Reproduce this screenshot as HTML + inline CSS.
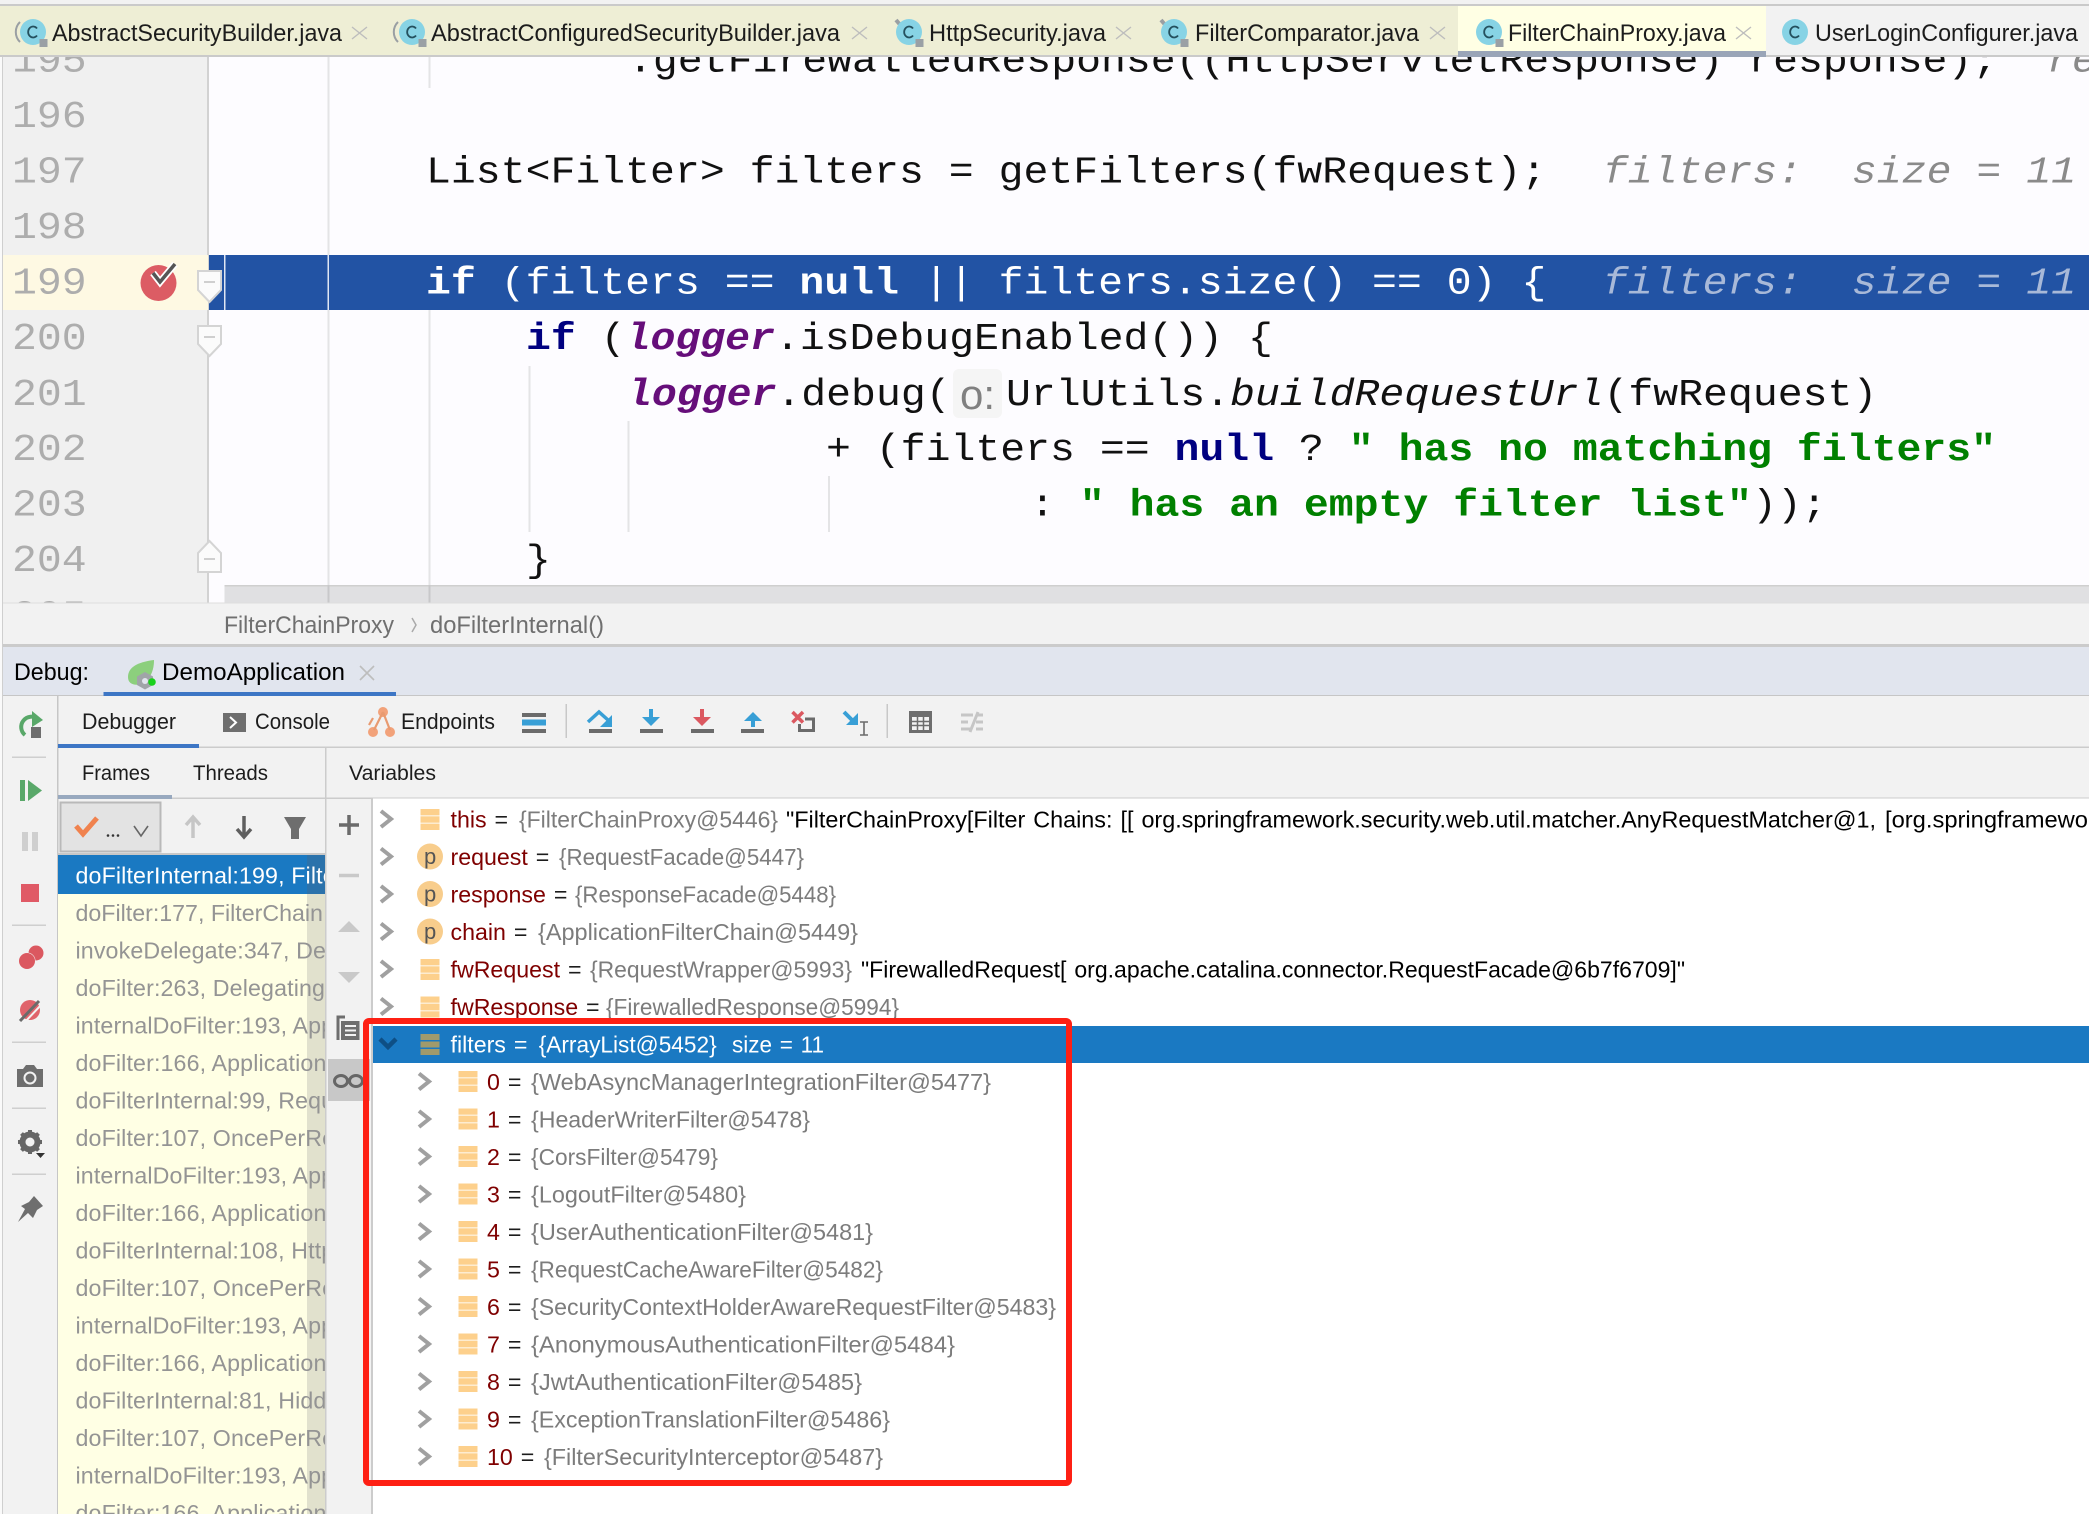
<!DOCTYPE html>
<html><head><meta charset="utf-8"><title>FilterChainProxy Debug</title>
<style>
html,body{margin:0;padding:0;background:#f2f2f2;width:2089px;height:1514px;overflow:hidden}
svg{display:block;position:absolute;left:0;top:0}
text{white-space:pre;font-family:"Liberation Sans",sans-serif;font-size:23.2px;fill:#1c1c1c}
.m{font-family:"Liberation Mono",monospace;font-size:41.5px;fill:#111}
.n{fill:#adadad}
.k{font-weight:bold;fill:#000080}
.l{font-weight:bold;font-style:italic;fill:#660e7a}
.s{font-weight:bold;fill:#008000}
.h{font-style:italic;fill:#8a8a8a}
.w{fill:#fff}
.hw{font-style:italic;fill:#a8b9d8}
.f{fill:#949494;letter-spacing:.14px}
.v{fill:#7f0000}
.g{fill:#7c7c7c}
.b{fill:#000}
</style></head><body>
<svg width="2089" height="1514" viewBox="0 0 2089 1514" xmlns="http://www.w3.org/2000/svg">
<defs>
<clipPath id="edit"><rect x="0" y="57" width="2089" height="546"/></clipPath>
<clipPath id="fr"><rect x="58" y="855" width="267" height="659"/></clipPath>
<clipPath id="tree"><rect x="373" y="798" width="1716" height="716"/></clipPath>
<g id="bars"><rect x="0" y="0" width="19" height="21" fill="#fdecd0"/><rect x="0" y="0" width="19" height="6" fill="#fdd08c"/><rect x="0" y="7.500" width="19" height="6" fill="#fdd08c"/><rect x="0" y="15" width="19" height="6" fill="#fdd08c"/></g>
<path id="chev" d="M-5-8 5 0-5 8" fill="none" stroke="#a0a0a0" stroke-width="4"/>
<g id="cls"><circle cx="0" cy="0" r="13" fill="#87d3e5"/><path d="M4-3.500A5 5.500 0 1 0 4 3.500" fill="none" stroke="#24505e" stroke-width="1.800"/><rect x="6.500" y="7" width="8" height="8" fill="#9aa0a5"/></g>
<path id="xx" d="M0 0 15 12M15 0 0 12" stroke="#bdbdbd" stroke-width="1.400" fill="none"/>
</defs>

<!-- base -->
<rect width="2089" height="1514" fill="#f2f2f2"/>

<!-- editor -->
<rect x="0" y="57" width="2089" height="546" fill="#fdfcff"/>
<rect x="0" y="57" width="208" height="546" fill="#f0f0f0"/>
<rect x="207" y="57" width="2" height="546" fill="#d2d2d2"/>
<rect x="0" y="0" width="2" height="1514" fill="#fafafa"/>
<rect x="2" y="57" width="1" height="1457" fill="#cfcfcf"/>

<rect x="327.500" y="57" width="2" height="546" fill="#e4e4e6"/>
<rect x="428.500" y="57" width="2" height="31" fill="#e4e4e6"/>
<rect x="428.500" y="310" width="2" height="293" fill="#e4e4e6"/>
<rect x="528.500" y="366" width="2" height="166" fill="#e4e4e6"/>
<rect x="627.500" y="421" width="2" height="111" fill="#e4e4e6"/>
<rect x="828" y="476" width="2" height="56" fill="#e4e4e6"/>

<!-- current line -->
<rect x="3" y="255" width="205" height="55" fill="#fef9e3"/>
<rect x="209" y="255" width="1880" height="55" fill="#2253a4"/>
<rect x="224" y="255" width="1.500" height="55" fill="#dfe6f3"/>
<rect x="327.500" y="255" width="1.500" height="55" fill="#dfe6f3"/>

<!-- inlay hint bg -->
<rect x="953" y="369" width="49" height="49" rx="6" fill="#f5f5f5"/>

<g clip-path="url(#edit)">
<g transform="scale(1 .92)">
<text class="m n" x="12" y="77.700">195</text>
<text class="m n" x="12" y="138">196</text>
<text class="m n" x="12" y="198.400">197</text>
<text class="m n" x="12" y="258.700">198</text>
<text class="m n" x="12" y="319">199</text>
<text class="m n" x="12" y="379.300">200</text>
<text class="m n" x="12" y="440.200">201</text>
<text class="m n" x="12" y="500">202</text>
<text class="m n" x="12" y="560.300">203</text>
<text class="m n" x="12" y="620.700">204</text>
<text class="m n" x="12" y="681">205</text>

<text class="m" x="628" y="77.700">.getFirewalledResponse((HttpServletResponse) response);  <tspan class="h">re</tspan></text>
<text class="m" x="426" y="198.400">List&lt;Filter&gt; filters = getFilters(fwRequest);  <tspan class="h" x="1603">filters:  size = 11</tspan></text>
<text class="m w" x="426" y="319"><tspan class="w" font-weight="bold">if</tspan> (filters == <tspan class="w" font-weight="bold">null</tspan> || filters.size() == 0) {<tspan class="hw" x="1603">filters:  size = 11</tspan></text>
<text class="m" x="526" y="379.300"><tspan class="k">if</tspan> (<tspan class="l">logger</tspan>.isDebugEnabled()) {</text>
<text class="m" x="627" y="440.200"><tspan class="l">logger</tspan>.debug(</text>
<text class="m" x="1006" y="440.200">UrlUtils.<tspan font-style="italic">buildRequestUrl</tspan>(fwRequest)</text>
<text class="m" x="826" y="500">+ (filters == <tspan class="k">null</tspan> ? <tspan class="s">" has no matching filters"</tspan></text>
<text class="m" x="1030" y="560.300">: <tspan class="s">" has an empty filter list"</tspan>));</text>
<text class="m" x="526" y="620.700">}</text>
</g>
<text x="960" y="409" style="font-size:42px;fill:#808080">o:</text>
</g>

<!-- fold markers -->
<path d="M198 271H221V290L209.500 302 198 290Z" fill="#fbfbfb" stroke="#d4d4d4" stroke-width="2"/><path d="M204 282H215" stroke="#cfcfcf" stroke-width="2"/>
<path d="M198 326H221V344L209.500 356 198 344Z" fill="#fbfbfb" stroke="#d4d4d4" stroke-width="2"/><path d="M204 337H215" stroke="#cfcfcf" stroke-width="2"/>
<path d="M198 572H221V553L209.500 541 198 553Z" fill="#fbfbfb" stroke="#d4d4d4" stroke-width="2"/><path d="M204 559H215" stroke="#cfcfcf" stroke-width="2"/>

<!-- breakpoint -->
<ellipse cx="158.500" cy="283" rx="18" ry="18" fill="#dc5c64"/>
<path d="M153 273 160 282 175 264" fill="none" stroke="#fff" stroke-width="7"/>
<path d="M153 273 160 282 175 264" fill="none" stroke="#555" stroke-width="3.500"/>

<!-- editor h scrollbar -->
<rect x="224.500" y="585" width="1865" height="18" fill="#e0e0e2"/>
<rect x="224.500" y="585" width="1865" height="1.500" fill="#cfcfcf"/>
<rect x="327.500" y="585" width="2" height="18" fill="#c8c8ca"/>
<rect x="428.500" y="585" width="2" height="18" fill="#c8c8ca"/>

<!-- top tabs -->
<rect x="0" y="0" width="2089" height="4" fill="#f2f2f2"/>
<rect x="0" y="6" width="1458" height="49" fill="#eeeed5"/>
<rect x="1458" y="6" width="308" height="49" fill="#ffffe4"/>
<rect x="1766" y="6" width="323" height="49" fill="#f2f2f2"/>
<rect x="0" y="4" width="2089" height="2" fill="#cacaca"/>
<rect x="0" y="55" width="2089" height="2" fill="#cacaca"/>
<rect x="1458" y="51" width="308" height="6" fill="#9aa5b8"/>

<path d="M20 22A14 14 0 0 0 20 42" fill="none" stroke="#9a9fa3" stroke-width="2"/>
<use href="#cls" x="33" y="32"/>
<text x="52" y="41" textLength="290" lengthAdjust="spacingAndGlyphs" style="font-size:24px">AbstractSecurityBuilder.java</text>
<use href="#xx" x="352" y="27"/>
<path d="M398 22A14 14 0 0 0 398 42" fill="none" stroke="#9a9fa3" stroke-width="2"/>
<use href="#cls" x="412" y="32"/>
<text x="431" y="41" textLength="409" lengthAdjust="spacingAndGlyphs" style="font-size:24px">AbstractConfiguredSecurityBuilder.java</text>
<use href="#xx" x="852" y="27"/>
<path d="M896 20 902 27" stroke="#9a9fa3" stroke-width="4"/>
<use href="#cls" x="909" y="32"/>
<text x="929" y="41" textLength="177" lengthAdjust="spacingAndGlyphs" style="font-size:24px">HttpSecurity.java</text>
<use href="#xx" x="1116" y="27"/>
<path d="M1161 20 1167 27" stroke="#9a9fa3" stroke-width="4"/>
<use href="#cls" x="1174" y="32"/>
<text x="1195" y="41" textLength="224" lengthAdjust="spacingAndGlyphs" style="font-size:24px">FilterComparator.java</text>
<use href="#xx" x="1430" y="27"/>
<use href="#cls" x="1489" y="32"/>
<text x="1508" y="41" textLength="218" lengthAdjust="spacingAndGlyphs" style="font-size:24px">FilterChainProxy.java</text>
<use href="#xx" x="1736" y="27"/>
<circle cx="1795" cy="32" r="13" fill="#87d3e5"/><path d="M1799 28.500A5 5.500 0 1 0 1799 35.500" fill="none" stroke="#24505e" stroke-width="1.800"/>
<text x="1815" y="41" textLength="263" lengthAdjust="spacingAndGlyphs" style="font-size:24px">UserLoginConfigurer.java</text>

<!-- breadcrumb -->
<rect x="3" y="603" width="2086" height="41" fill="#f2f2f2"/>
<rect x="3" y="602.500" width="2086" height="1" fill="#dedede"/>
<text x="224" y="633" textLength="170" lengthAdjust="spacingAndGlyphs" class="g" style="font-size:24px;fill:#6f6f6f">FilterChainProxy</text>
<path d="M412 618 416 625 412 632" fill="none" stroke="#aaa" stroke-width="1.500"/>
<text x="430" y="633" textLength="174" lengthAdjust="spacingAndGlyphs" class="g" style="font-size:24px;fill:#6f6f6f">doFilterInternal()</text>

<!-- debug header -->
<rect x="3" y="644" width="2086" height="3" fill="#cbcbcb"/>
<rect x="3" y="647" width="2086" height="48" fill="#e1e5ee"/>
<rect x="3" y="695" width="2086" height="1" fill="#c6c6c6"/>
<rect x="103.500" y="692" width="292.500" height="4" fill="#3d76c5"/>
<text x="14" y="680" textLength="75" lengthAdjust="spacingAndGlyphs" style="font-size:24.500px;fill:#000">Debug:</text>
<path d="M128 677C128 667 138 662 154 660 154 668 152 678 142 684 134 686 128 684 128 677Z" fill="#8ccf7d"/>
<path d="M145 672 153 676.500V685L145 689.500 137 685V676.500Z" fill="#a0a4a8"/><circle cx="145" cy="681" r="3" fill="#e1e5ee"/>
<circle cx="152" cy="682" r="3.800" fill="#19d11c"/>
<text x="162" y="680" textLength="183" lengthAdjust="spacingAndGlyphs" style="font-size:24.500px;fill:#000">DemoApplication</text>
<path d="M360 666 374 680M374 666 360 680" stroke="#bdbdbd" stroke-width="1.600"/>

<!-- debugger toolbar -->
<rect x="57" y="696" width="1.500" height="818" fill="#c6c6c6"/>
<rect x="58" y="746.500" width="2031" height="1.500" fill="#cccccc"/>
<rect x="58" y="744" width="141" height="4" fill="#3d76c5"/>
<text x="82" y="729" textLength="94" lengthAdjust="spacingAndGlyphs" style="font-size:22px">Debugger</text>
<rect x="223" y="713" width="23" height="19" fill="#6e6e6e"/><path d="M230 717 236 722.500 230 728" fill="none" stroke="#fff" stroke-width="2"/>
<text x="255" y="729" textLength="75" lengthAdjust="spacingAndGlyphs" style="font-size:22px">Console</text>
<g fill="#f2a27a" stroke="none"><circle cx="383" cy="712" r="5"/><circle cx="373" cy="732" r="5"/><circle cx="390" cy="732" r="5"/></g>
<path d="M383 712 374 730M383 712 390 730M369 725 373 718" stroke="#e89a70" stroke-width="2.200" fill="none"/>
<text x="401" y="729" textLength="94" lengthAdjust="spacingAndGlyphs" style="font-size:22px">Endpoints</text>

<rect x="522" y="713" width="24" height="4" fill="#6b6b6b"/><rect x="522" y="719.500" width="24" height="6" fill="#389fd6"/><rect x="522" y="729" width="24" height="4" fill="#6b6b6b"/>
<rect x="565.500" y="704" width="1.500" height="34" fill="#c8c8c8"/>
<!-- step over -->
<path d="M588 722 599 712 608 720" fill="none" stroke="#389fd6" stroke-width="3.500"/><path d="M612 715V727H600Z" fill="#389fd6"/><rect x="589" y="729" width="23" height="4" fill="#6b6b6b"/>
<!-- step into -->
<path d="M651 709V720" stroke="#389fd6" stroke-width="4"/><path d="M642 717H660L651 726Z" fill="#389fd6"/><rect x="640" y="729" width="23" height="4" fill="#6b6b6b"/>
<!-- force -->
<path d="M702 709V720" stroke="#db5860" stroke-width="4"/><path d="M693 717H711L702 726Z" fill="#db5860"/><rect x="691" y="729" width="23" height="4" fill="#6b6b6b"/>
<!-- out -->
<path d="M753 715V727" stroke="#389fd6" stroke-width="4"/><path d="M744 721H762L753 712Z" fill="#389fd6"/><rect x="741" y="729" width="23" height="4" fill="#6b6b6b"/>
<!-- drop -->
<path d="M792.500 712 803 722.500M803 712 792.500 722.500" stroke="#db5860" stroke-width="3.500"/><path d="M805 719H813.500V730.500H799.500V724" fill="none" stroke="#6b6b6b" stroke-width="3"/>
<!-- cursor -->
<path d="M844 712 855 723" stroke="#389fd6" stroke-width="4"/><path d="M858 713V725H846Z" fill="#389fd6"/><path d="M860 722H868M864 722V735M860 735H868" stroke="#6b6b6b" stroke-width="1.600" fill="none"/>
<rect x="886.500" y="704" width="1.500" height="34" fill="#c8c8c8"/>
<!-- calc -->
<rect x="909" y="711" width="23" height="22" fill="#6e6e6e"/><rect x="912" y="717" width="17" height="13" fill="#f2f2f2"/><path d="M917.500 717V730M923.500 717V730M912 721.500H929M912 725.500H929" stroke="#6e6e6e" stroke-width="1.500"/>
<!-- trace -->
<path d="M961 715H973M977 715H983M961 722H968M976 722H983M961 729H972M976 729H983M978 712 970 732" fill="none" stroke="#c6c6c6" stroke-width="3"/>

<!-- left strip -->
<path d="M38 719A10 10 0 1 0 25 735" fill="none" stroke="#59a869" stroke-width="4"/><path d="M32 711 43 720 32 727Z" fill="#59a869"/><rect x="31" y="727" width="10" height="11" fill="#6e6e6e"/>
<rect x="12" y="756.500" width="34" height="1.500" fill="#cfcfcf"/>
<rect x="20" y="780" width="5" height="21" fill="#59a869"/><path d="M28 780 42 790.500 28 801Z" fill="#59a869"/>
<rect x="22" y="832" width="6" height="19" fill="#cfcfcf"/><rect x="32" y="832" width="6" height="19" fill="#cfcfcf"/>
<rect x="21" y="884" width="18" height="18" fill="#e05a66"/>
<rect x="12" y="924.500" width="34" height="1.500" fill="#cfcfcf"/>
<circle cx="36" cy="953" r="7.500" fill="#db5860"/><circle cx="27" cy="961" r="8.500" fill="#f2f2f2"/><circle cx="27" cy="961" r="8" fill="#db5860"/>
<circle cx="30" cy="1010" r="10" fill="#e0636b"/><path d="M20 1021 39 1001" stroke="#6b6b6b" stroke-width="3"/><path d="M24 1023 42 1004" stroke="#f2f2f2" stroke-width="2"/>
<rect x="12" y="1041.500" width="34" height="1.500" fill="#cfcfcf"/>
<path d="M17 1069H23L26 1065H34L37 1069H43V1087H17Z" fill="#6e6e6e"/><circle cx="30" cy="1078" r="5.500" fill="none" stroke="#f2f2f2" stroke-width="2"/>
<rect x="12" y="1107.500" width="34" height="1.500" fill="#cfcfcf"/>
<circle cx="30" cy="1142" r="8" fill="none" stroke="#666" stroke-width="5"/><path d="M30 1130V1154M18 1142H42M21.500 1133.500 38.500 1150.500M38.500 1133.500 21.500 1150.500" stroke="#666" stroke-width="4"/><circle cx="30" cy="1142" r="4.500" fill="#f2f2f2"/><path d="M36 1153H45L40.500 1158Z" fill="#333"/>
<rect x="12" y="1173.500" width="34" height="1.500" fill="#cfcfcf"/>
<path d="M34 1196 43 1206 37 1210 33 1218 28 1213 18 1222 25 1209 21 1206 29 1202Z" fill="#6e6e6e"/>

<!-- frames header -->
<rect x="325" y="748" width="1.500" height="766" fill="#cccccc"/>
<rect x="58" y="797.500" width="2031" height="1.500" fill="#cccccc"/>
<rect x="58" y="795" width="114" height="4" fill="#98a9bf"/>
<text x="82" y="780" textLength="68" lengthAdjust="spacingAndGlyphs" style="font-size:21.500px">Frames</text>
<text x="193" y="780" textLength="75" lengthAdjust="spacingAndGlyphs" style="font-size:21.500px">Threads</text>
<text x="349" y="780" textLength="87" lengthAdjust="spacingAndGlyphs" style="font-size:21.500px">Variables</text>

<!-- frames toolbar -->
<rect x="60.500" y="802.500" width="100" height="49" fill="#e3e3e3" stroke="#b9b9b9" stroke-width="2"/>
<path d="M76 826 83 834 97 818" fill="none" stroke="#f0824e" stroke-width="5"/>
<circle cx="108" cy="835.500" r="1.300" fill="#333"/><circle cx="113" cy="835.500" r="1.300" fill="#333"/><circle cx="118" cy="835.500" r="1.300" fill="#333"/>
<path d="M134 826 141 836 148 826" fill="none" stroke="#666" stroke-width="1.600"/>
<path d="M193 838V818M186 825 193 817 200 825" fill="none" stroke="#c6c6c6" stroke-width="3.500"/>
<path d="M244 816V837M237 829 244 837 251 829" fill="none" stroke="#5f5f5f" stroke-width="3.500"/>
<path d="M284 817H306L299 829V839H291V829Z" fill="#6e6e6e"/>

<!-- frames list -->
<rect x="58" y="855" width="267" height="659" fill="#ffffe4"/>
<rect x="57" y="853" width="268" height="2.500" fill="#c8c8c8"/>
<rect x="58" y="855" width="267" height="39" fill="#1a79c2"/>
<rect x="307" y="894" width="18" height="620" fill="#e1e1cd"/>
<rect x="307" y="855" width="18" height="39" fill="#2b72ab"/>
<g clip-path="url(#fr)">
<text x="75.500" y="883.500" class="w" style="letter-spacing:.14px">doFilterInternal:199, FilterChainProxy</text>
<text class="f" x="75.500" y="921" style="letter-spacing:0">doFilter:177, FilterChain</text>
<text class="f" x="75.500" y="958.500">invokeDelegate:347, DelegatingFilterProxy</text>
<text class="f" x="75.500" y="996">doFilter:263, DelegatingFilterProxy</text>
<text class="f" x="75.500" y="1033.500">internalDoFilter:193, ApplicationFilterChain</text>
<text class="f" x="75.500" y="1071">doFilter:166, ApplicationFilterChain</text>
<text class="f" x="75.500" y="1108.500">doFilterInternal:99, RequestContextFilter</text>
<text class="f" x="75.500" y="1146">doFilter:107, OncePerRequestFilter</text>
<text class="f" x="75.500" y="1183.500">internalDoFilter:193, ApplicationFilterChain</text>
<text class="f" x="75.500" y="1221">doFilter:166, ApplicationFilterChain</text>
<text class="f" x="75.500" y="1258.500">doFilterInternal:108, HttpPutFormContentFilter</text>
<text class="f" x="75.500" y="1296">doFilter:107, OncePerRequestFilter</text>
<text class="f" x="75.500" y="1333.500">internalDoFilter:193, ApplicationFilterChain</text>
<text class="f" x="75.500" y="1371">doFilter:166, ApplicationFilterChain</text>
<text class="f" x="75.500" y="1408.500">doFilterInternal:81, HiddenHttpMethodFilter</text>
<text class="f" x="75.500" y="1446">doFilter:107, OncePerRequestFilter</text>
<text class="f" x="75.500" y="1483.500">internalDoFilter:193, ApplicationFilterChain</text>
<text class="f" x="75.500" y="1521">doFilter:166, ApplicationFilterChain</text>
</g>

<!-- variables side toolbar -->
<path d="M339 825H359M349 815V835" stroke="#6b6b6b" stroke-width="3.500"/>
<path d="M339 875.500H359" stroke="#c9c9c9" stroke-width="3.500"/>
<path d="M338 932 349 921 360 932Z" fill="#c9c9c9"/>
<path d="M338 972 349 983 360 972Z" fill="#c9c9c9"/>
<path d="M345 1017H338V1040" fill="none" stroke="#6e6e6e" stroke-width="3"/><rect x="341" y="1021" width="18.500" height="19" fill="#6e6e6e"/><path d="M345 1026H356M345 1030.500H356M345 1035H356" stroke="#f2f2f2" stroke-width="2"/>
<rect x="328" y="1059" width="42" height="42" fill="#c8c8c8"/>
<ellipse cx="341" cy="1081" rx="6.500" ry="5.500" fill="none" stroke="#666" stroke-width="3"/><ellipse cx="356" cy="1081" rx="6.500" ry="5.500" fill="none" stroke="#666" stroke-width="3"/>

<!-- tree -->
<rect x="373" y="798.500" width="1716" height="716" fill="#fff"/>
<rect x="371" y="798" width="2" height="716" fill="#cccccc"/>
<rect x="373" y="1026" width="1716" height="37" fill="#1a79c2"/>

<g clip-path="url(#tree)" style="word-spacing:1.500px">
<use href="#chev" x="386" y="819"/><use href="#bars" x="420.500" y="809"/>
<text x="450.500" y="827.500"><tspan class="v">this</tspan> =</text>
<text class="g" x="519" y="827.500" textLength="259" lengthAdjust="spacingAndGlyphs">{FilterChainProxy@5446}</text>
<text class="b" x="786" y="827.500" textLength="1090" lengthAdjust="spacingAndGlyphs">"FilterChainProxy[Filter Chains: [[ org.springframework.security.web.util.matcher.AnyRequestMatcher@1,</text>
<text class="b" x="1885" y="827.500" textLength="203" lengthAdjust="spacingAndGlyphs">[org.springframewo</text>

<use href="#chev" x="386" y="856.500"/><circle cx="430" cy="856.500" r="13" fill="#f8cd8c"/><text x="424" y="864" style="fill:#555;font-size:22px">p</text>
<text x="450.500" y="865"><tspan class="v">request</tspan> =</text>
<text class="g" x="559" y="865" textLength="245" lengthAdjust="spacingAndGlyphs">{RequestFacade@5447}</text>

<use href="#chev" x="386" y="894"/><circle cx="430" cy="894" r="13" fill="#f8cd8c"/><text x="424" y="901.500" style="fill:#555;font-size:22px">p</text>
<text x="450.500" y="902.500"><tspan class="v">response</tspan> =</text>
<text class="g" x="575" y="902.500" textLength="261" lengthAdjust="spacingAndGlyphs">{ResponseFacade@5448}</text>

<use href="#chev" x="386" y="931.500"/><circle cx="430" cy="931.500" r="13" fill="#f8cd8c"/><text x="424" y="939" style="fill:#555;font-size:22px">p</text>
<text x="450.500" y="940"><tspan class="v">chain</tspan> =</text>
<text class="g" x="538" y="940" textLength="320" lengthAdjust="spacingAndGlyphs">{ApplicationFilterChain@5449}</text>

<use href="#chev" x="386" y="969"/><use href="#bars" x="420.500" y="959"/>
<text x="450.500" y="977.500"><tspan class="v">fwRequest</tspan> =</text>
<text class="g" x="590" y="977.500" textLength="262" lengthAdjust="spacingAndGlyphs">{RequestWrapper@5993}</text>
<text class="b" x="861" y="977.500" textLength="824" lengthAdjust="spacingAndGlyphs">"FirewalledRequest[ org.apache.catalina.connector.RequestFacade@6b7f6709]"</text>

<use href="#chev" x="386" y="1006.500"/><use href="#bars" x="420.500" y="996.500"/>
<text x="450.500" y="1015"><tspan class="v">fwResponse</tspan> =</text>
<text class="g" x="606" y="1015" textLength="293" lengthAdjust="spacingAndGlyphs">{FirewalledResponse@5994}</text>

<path d="M380 1039 388 1047 396 1039" fill="none" stroke="#0e4f85" stroke-width="4.500"/>
<g transform="translate(420.500 1034)"><rect width="19" height="6" fill="#a09a6c"/><rect y="7.500" width="19" height="6" fill="#a09a6c"/><rect y="15" width="19" height="6" fill="#a09a6c"/></g>
<text x="450.500" y="1052.500" class="w">filters =</text>
<text x="538.700" y="1052.500" class="w" textLength="178" lengthAdjust="spacingAndGlyphs">{ArrayList@5452}</text>
<text x="732" y="1052.500" class="w" textLength="92" lengthAdjust="spacingAndGlyphs">size = 11</text>

<use href="#chev" x="424" y="1081.500"/><use href="#bars" x="458.500" y="1071"/>
<text x="487" y="1090"><tspan class="v">0</tspan> =</text>
<text class="g" x="531" y="1090" textLength="460" lengthAdjust="spacingAndGlyphs">{WebAsyncManagerIntegrationFilter@5477}</text>
<use href="#chev" x="424" y="1119"/><use href="#bars" x="458.500" y="1108.500"/>
<text x="487" y="1127.500"><tspan class="v">1</tspan> =</text>
<text class="g" x="531" y="1127.500" textLength="279" lengthAdjust="spacingAndGlyphs">{HeaderWriterFilter@5478}</text>
<use href="#chev" x="424" y="1156.500"/><use href="#bars" x="458.500" y="1146"/>
<text x="487" y="1165"><tspan class="v">2</tspan> =</text>
<text class="g" x="531" y="1165" textLength="187" lengthAdjust="spacingAndGlyphs">{CorsFilter@5479}</text>
<use href="#chev" x="424" y="1194"/><use href="#bars" x="458.500" y="1183.500"/>
<text x="487" y="1202.500"><tspan class="v">3</tspan> =</text>
<text class="g" x="531" y="1202.500" textLength="215" lengthAdjust="spacingAndGlyphs">{LogoutFilter@5480}</text>
<use href="#chev" x="424" y="1231.500"/><use href="#bars" x="458.500" y="1221"/>
<text x="487" y="1240"><tspan class="v">4</tspan> =</text>
<text class="g" x="531" y="1240" textLength="342" lengthAdjust="spacingAndGlyphs">{UserAuthenticationFilter@5481}</text>
<use href="#chev" x="424" y="1269"/><use href="#bars" x="458.500" y="1258.500"/>
<text x="487" y="1277.500"><tspan class="v">5</tspan> =</text>
<text class="g" x="531" y="1277.500" textLength="352" lengthAdjust="spacingAndGlyphs">{RequestCacheAwareFilter@5482}</text>
<use href="#chev" x="424" y="1306.500"/><use href="#bars" x="458.500" y="1296"/>
<text x="487" y="1315"><tspan class="v">6</tspan> =</text>
<text class="g" x="531" y="1315" textLength="525" lengthAdjust="spacingAndGlyphs">{SecurityContextHolderAwareRequestFilter@5483}</text>
<use href="#chev" x="424" y="1344"/><use href="#bars" x="458.500" y="1333.500"/>
<text x="487" y="1352.500"><tspan class="v">7</tspan> =</text>
<text class="g" x="531" y="1352.500" textLength="424" lengthAdjust="spacingAndGlyphs">{AnonymousAuthenticationFilter@5484}</text>
<use href="#chev" x="424" y="1381.500"/><use href="#bars" x="458.500" y="1371"/>
<text x="487" y="1390"><tspan class="v">8</tspan> =</text>
<text class="g" x="531" y="1390" textLength="331" lengthAdjust="spacingAndGlyphs">{JwtAuthenticationFilter@5485}</text>
<use href="#chev" x="424" y="1419"/><use href="#bars" x="458.500" y="1408.500"/>
<text x="487" y="1427.500"><tspan class="v">9</tspan> =</text>
<text class="g" x="531" y="1427.500" textLength="359" lengthAdjust="spacingAndGlyphs">{ExceptionTranslationFilter@5486}</text>
<use href="#chev" x="424" y="1456.500"/><use href="#bars" x="458.500" y="1446"/>
<text x="487" y="1465"><tspan class="v">10</tspan> =</text>
<text class="g" x="544" y="1465" textLength="339" lengthAdjust="spacingAndGlyphs">{FilterSecurityInterceptor@5487}</text>
</g>

<!-- red annotation -->
<rect x="366" y="1021" width="703" height="462" rx="3" fill="none" stroke="#fe2014" stroke-width="6"/>
</svg>
</body></html>
